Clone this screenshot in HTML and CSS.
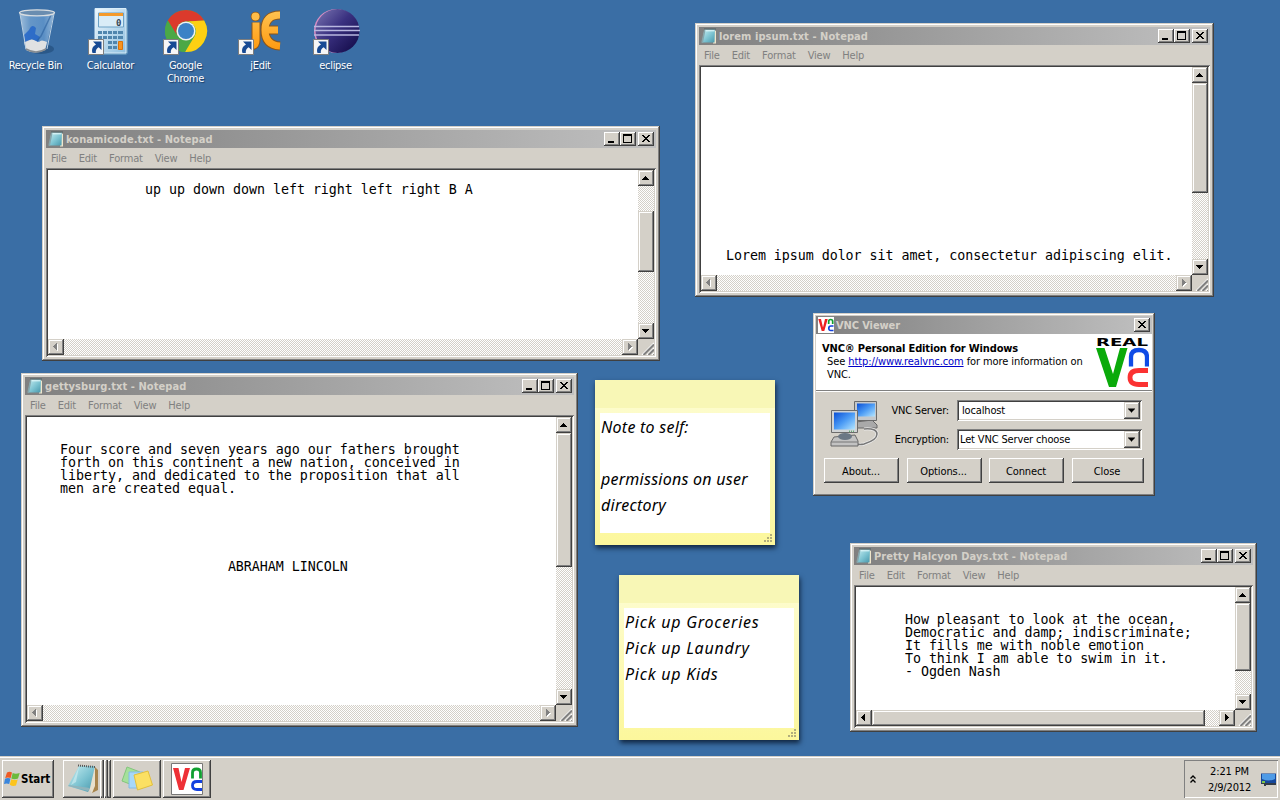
FILE: index.html
```html
<!DOCTYPE html>
<html lang="en">
<head>
<meta charset="utf-8">
<title>Desktop</title>
<link rel="stylesheet" href="styles.css">
</head>
<body>
<svg class="defs" width="0" height="0" aria-hidden="true">
  <defs>
    <linearGradient id="pad" x1="0" y1="0" x2="1" y2="1"><stop offset="0" stop-color="#c9eef2"/><stop offset=".55" stop-color="#7cc3d1"/><stop offset="1" stop-color="#4796ab"/></linearGradient>
    <linearGradient id="screen" x1="0" y1="0" x2="1" y2="1"><stop offset="0" stop-color="#0a4fd6"/><stop offset=".5" stop-color="#4b9bf5"/><stop offset="1" stop-color="#b5e6ff"/></linearGradient>
    <linearGradient id="glass" x1="0" y1="0" x2="1" y2="0"><stop offset="0" stop-color="#a9c6e0"/><stop offset=".3" stop-color="#6b9bcb"/><stop offset=".7" stop-color="#5d92c8"/><stop offset="1" stop-color="#9fbfdd"/></linearGradient>
    <linearGradient id="orange" gradientUnits="userSpaceOnUse" x1="0" y1="2" x2="0" y2="42"><stop offset="0" stop-color="#ffc352"/><stop offset="1" stop-color="#ff9a10"/></linearGradient>
    <linearGradient id="ecl" x1="0" y1="0" x2="1" y2="1"><stop offset="0" stop-color="#7c78b4"/><stop offset=".45" stop-color="#3a3180"/><stop offset="1" stop-color="#0e0642"/></linearGradient>
    <linearGradient id="calc" x1="0" y1="0" x2="1" y2="1"><stop offset="0" stop-color="#eef7fd"/><stop offset="1" stop-color="#8fc0e0"/></linearGradient>
    <symbol id="i-note" viewBox="0 0 16 16">
      <path d="M13 2l2 1v12.500h-3z" fill="#efe6cc"/>
      <path d="M3.500 1.500h10.500L13.500 14.500H1z" fill="url(#pad)"/>
      <path d="M3 2L.3 14.500 2 15 4.500 2z" fill="#86a6ac"/>
      <path d="M3.500 1h11" stroke="#3d5357" stroke-width="1.600" stroke-dasharray="1 1"/>
      <path d="M4.500 2.800h9" stroke="#e8fbfc"/>
    </symbol>
    <symbol id="i-min" viewBox="0 0 16 14"><path d="M4 9h6v2H4z"/></symbol>
    <symbol id="i-max" viewBox="0 0 16 14"><path fill-rule="evenodd" d="M3 2h9v9H3zM4 4v6h7V4z"/></symbol>
    <symbol id="i-close" viewBox="0 0 16 14"><path d="M4 3h2v1h1v1h2V4h1V3h2v1h-1v1h-1v1H9v1h1v1h1v1h1v1h-2V9H9V8H7v1H6v1H4V9h1V8h1V7h1V6H6V5H5V4H4z"/></symbol>
    <symbol id="i-up" viewBox="0 0 16 16"><path d="M7 6h1v1h1v1h1v1h1v1H4V9h1V8h1V7h1z"/></symbol>
    <symbol id="i-down" viewBox="0 0 16 16"><path d="M4 6h7v1h-1v1H9v1H8v1H7V9H6V8H5V7H4z"/></symbol>
    <symbol id="i-left" viewBox="0 0 16 16"><path d="M9 4v7H8v-1H7V9H6V8H5V7h1V6h1V5h1V4z"/></symbol>
    <symbol id="i-right" viewBox="0 0 16 16"><path d="M6 4h1v1h1v1h1v1h1v1H9v1H8v1H7v1H6z"/></symbol>
    <symbol id="i-grip" viewBox="0 0 16 16">
      <path d="M4 16L16 4M9 16l7-7M14 16l2-2" stroke="#fff" stroke-width="1.300"/>
      <path d="M5.500 16L16 5.500M10.500 16L16 10.500M15.500 16l.5-.5" stroke="#808080" stroke-width="2"/>
    </symbol>
    <symbol id="i-dots" viewBox="0 0 8 8"><path fill="#b2ae7c" d="M6 0h2v2H6zM3 3h2v2H3zM6 3h2v2H6zM0 6h2v2H0zM3 6h2v2H3zM6 6h2v2H6z"/></symbol>
    <symbol id="i-arrow" viewBox="0 0 16 16">
      <path d="M.5.500h15v15H.5z" fill="#f6f6f6" stroke="#7d7d7d"/>
      <path d="M5 2.500h8.500V11l-2.800-2.700C8.500 9.500 7.600 11 7.800 14H4.500C3.200 10 5 7 8 5.500z" fill="#174a94"/>
    </symbol>
    <symbol id="i-vnc" viewBox="0 0 32 32">
      <path d="M.5.500h31v31H.5z" fill="#fff" stroke="#777"/>
      <path d="M2 5h5.500l3 14 3.500-14h5l-6.500 22H8z" fill="#ee3036"/>
      <path d="M21.500 15.500V9.500q0-3.500 4-3.500t4 3.500v6" fill="none" stroke="#10a030" stroke-width="2.800"/>
      <path d="M31 18.500h-5q-4.500 0-4.500 4t4.500 4h5" fill="none" stroke="#1240e0" stroke-width="2.800"/>
    </symbol>
    <symbol id="i-vnc-small" viewBox="0 0 16 16">
      <path d="M0 0h16v16H0z" fill="#fff"/>
      <path d="M.3 2h2.700l2 8.500L7 2h2.700L6.300 14H3.700z" fill="#ee2020"/>
      <path d="M10.700 7V4.500q0-2 2-2t2 2V7" fill="none" stroke="#10a030" stroke-width="1.700"/>
      <path d="M15.500 9H13q-2.200 0-2.200 2.300T13 13.500h2.500" fill="none" stroke="#1240e0" stroke-width="1.700"/>
    </symbol>
    <g id="jedit-shape">
      <path d="M19 14.500V32q0 6-6 6" fill="none"/>
      <path d="M43 7Q28 7 28 22t15 16M28 22h13" fill="none"/>
    </g>
  </defs>
</svg>

<main class="desktop">
  <nav class="shortcuts">
    <div class="shortcut">
      <svg width="48" height="48" viewBox="0 0 48 48">
        <ellipse cx="29" cy="41" rx="13" ry="5" fill="#1f4977" opacity=".6"/>
        <path d="M8 5l6 35q10 7 20 0L42 5z" fill="url(#glass)" opacity=".9"/>
        <path d="M12 34l2 8q9 5 19 0l2-8q-6-3-8 0-8-5-15 0z" fill="#dfe1e2"/>
        <path d="M17 22q3-7 7-2l-1 6 5 3-2 5-6-3-7 3-1-7z" fill="#2566c8" opacity=".85"/>
        <path d="M39 7L29 28l-4 5" fill="none" stroke="#295f9d" stroke-width="1.500" opacity=".6"/>
        <path d="M8 6l6 35M42 6l-7 35" stroke="#b9cfe3" fill="none"/>
        <ellipse cx="25" cy="4.800" rx="17.500" ry="3" fill="#6a8db0" stroke="#d8dde1" stroke-width="1.300"/>
        <path d="M14 41q10 6 20 0" fill="none" stroke="#868b90" stroke-width="1.500"/>
      </svg>
      <span class="shortcut-name">Recycle Bin</span>
    </div>
    <div class="shortcut">
      <svg width="48" height="48" viewBox="0 0 48 48">
        <path d="M9 1h30l2 2v42l-2 2H9z" fill="#5e93bb"/>
        <path d="M8 .500h31V45H8z" fill="url(#calc)" stroke="#d9edf9"/>
        <path d="M11.500 5h25v14h-25z" fill="#d9ecf7" stroke="#6ba1c5"/>
        <path d="M12 5h24v3H12z" fill="#f49a2b"/>
        <text x="29" y="17.500" class="calc-digit">0</text>
        <g fill="#4f86ae"><path d="M11 23h4v3h-4zM16 23h4v3h-4zM21 23h4v3h-4zM26 23h4v3h-4zM31 23h5v3h-5zM11 28h4v3h-4zM16 28h4v3h-4zM21 28h4v3h-4zM26 28h4v3h-4zM31 28h5v3h-5zM21 33h4v3h-4zM26 33h4v3h-4zM21 38h4v3h-4zM26 38h4v3h-4z"/></g>
        <path d="M31.500 33.500h4v8h-4z" fill="#f7931e" stroke="#d9730a"/>
        <use href="#i-arrow" x="1" y="31" width="16" height="16"/>
      </svg>
      <span class="shortcut-name">Calculator</span>
    </div>
    <div class="shortcut">
      <svg width="48" height="48" viewBox="0 0 48 48">
        <circle cx="24" cy="23" r="21" fill="#4ba846"/>
        <path d="M5.800 12.500A21 21 0 0 1 42.200 12.500L24 13.500A10 10 0 0 0 15.300 28z" fill="#db3a2c"/>
        <path d="M42.200 12.500A21 21 0 0 1 23 44l9.700-16A10 10 0 0 0 24 13.500z" fill="#fdd013"/>
        <path d="M5.800 12.500L15.300 28A10 10 0 0 0 28 32L23 44A21 21 0 0 1 5.800 12.500z" fill="#4ba846"/>
        <circle cx="24" cy="23" r="9.500" fill="#f2f2f2"/><circle cx="24" cy="23" r="8" fill="#3c82c6"/>
        <use href="#i-arrow" x="1" y="31" width="16" height="16"/>
      </svg>
      <span class="shortcut-name">Google<br>Chrome</span>
    </div>
    <div class="shortcut">
      <svg width="48" height="48" viewBox="0 0 48 48">
        <circle cx="18.500" cy="8.500" r="4.800" fill="#8c5518"/>
        <use href="#jedit-shape" stroke="#8c5518" stroke-width="9"/>
        <circle cx="18.500" cy="8.500" r="4" fill="#ffbd48"/>
        <use href="#jedit-shape" stroke="url(#orange)" stroke-width="7"/>
        <use href="#i-arrow" x="1" y="31" width="16" height="16"/>
      </svg>
      <span class="shortcut-name">jEdit</span>
    </div>
    <div class="shortcut">
      <svg width="48" height="48" viewBox="0 0 48 48">
        <circle cx="24" cy="23" r="22" fill="#d98fc4"/>
        <circle cx="25.500" cy="23" r="22" fill="url(#ecl)"/>
        <path d="M2 18.500h45M2 22.500h46M2 27h45" stroke="#b9b8e0" stroke-width="1.300"/>
        <use href="#i-arrow" x="1" y="31" width="16" height="16"/>
      </svg>
      <span class="shortcut-name">eclipse</span>
    </div>
  </nav>

  <section class="window notepad konami">
    <header class="titlebar"><svg class="app-icon"><use href="#i-note"/></svg><h2 class="title">konamicode.txt - Notepad</h2><div class="controls"><button class="btn"><svg><use href="#i-min"/></svg></button><button class="btn"><svg><use href="#i-max"/></svg></button><button class="btn close"><svg><use href="#i-close"/></svg></button></div></header>
    <nav class="menu"><span>File</span><span>Edit</span><span>Format</span><span>View</span><span>Help</span></nav>
    <div class="client">
      <pre class="text">up up down down left right left right B A</pre>
      <div class="vbar"><i class="sb"><svg><use href="#i-up"/></svg></i><i class="thumb"></i><i class="sb end"><svg><use href="#i-down"/></svg></i></div>
      <div class="hbar off"><i class="sb"><svg><use href="#i-left"/></svg></i><i class="sb end"><svg><use href="#i-right"/></svg></i></div>
      <svg class="grip"><use href="#i-grip"/></svg>
    </div>
  </section>

  <section class="window notepad lorem">
    <header class="titlebar"><svg class="app-icon"><use href="#i-note"/></svg><h2 class="title">lorem ipsum.txt - Notepad</h2><div class="controls"><button class="btn"><svg><use href="#i-min"/></svg></button><button class="btn"><svg><use href="#i-max"/></svg></button><button class="btn close"><svg><use href="#i-close"/></svg></button></div></header>
    <nav class="menu"><span>File</span><span>Edit</span><span>Format</span><span>View</span><span>Help</span></nav>
    <div class="client">
      <pre class="text">Lorem ipsum dolor sit amet, consectetur adipiscing elit.</pre>
      <div class="vbar"><i class="sb"><svg><use href="#i-up"/></svg></i><i class="thumb"></i><i class="sb end"><svg><use href="#i-down"/></svg></i></div>
      <div class="hbar off"><i class="sb"><svg><use href="#i-left"/></svg></i><i class="sb end"><svg><use href="#i-right"/></svg></i></div>
      <svg class="grip"><use href="#i-grip"/></svg>
    </div>
  </section>

  <section class="window notepad gettysburg">
    <header class="titlebar"><svg class="app-icon"><use href="#i-note"/></svg><h2 class="title">gettysburg.txt - Notepad</h2><div class="controls"><button class="btn"><svg><use href="#i-min"/></svg></button><button class="btn"><svg><use href="#i-max"/></svg></button><button class="btn close"><svg><use href="#i-close"/></svg></button></div></header>
    <nav class="menu"><span>File</span><span>Edit</span><span>Format</span><span>View</span><span>Help</span></nav>
    <div class="client">
      <pre class="text">Four score and seven years ago our fathers brought
forth on this continent a new nation, conceived in
liberty, and dedicated to the proposition that all
men are created equal.





                     ABRAHAM LINCOLN</pre>
      <div class="vbar"><i class="sb"><svg><use href="#i-up"/></svg></i><i class="thumb"></i><i class="sb end"><svg><use href="#i-down"/></svg></i></div>
      <div class="hbar off"><i class="sb"><svg><use href="#i-left"/></svg></i><i class="sb end"><svg><use href="#i-right"/></svg></i></div>
      <svg class="grip"><use href="#i-grip"/></svg>
    </div>
  </section>

  <section class="window notepad halcyon">
    <header class="titlebar"><svg class="app-icon"><use href="#i-note"/></svg><h2 class="title">Pretty Halcyon Days.txt - Notepad</h2><div class="controls"><button class="btn"><svg><use href="#i-min"/></svg></button><button class="btn"><svg><use href="#i-max"/></svg></button><button class="btn close"><svg><use href="#i-close"/></svg></button></div></header>
    <nav class="menu"><span>File</span><span>Edit</span><span>Format</span><span>View</span><span>Help</span></nav>
    <div class="client">
      <pre class="text">How pleasant to look at the ocean,
Democratic and damp; indiscriminate;
It fills me with noble emotion
To think I am able to swim in it.
- Ogden Nash</pre>
      <div class="vbar"><i class="sb"><svg><use href="#i-up"/></svg></i><i class="thumb"></i><i class="sb end"><svg><use href="#i-down"/></svg></i></div>
      <div class="hbar"><i class="sb"><svg><use href="#i-left"/></svg></i><i class="thumb"></i><i class="sb end"><svg><use href="#i-right"/></svg></i></div>
      <svg class="grip"><use href="#i-grip"/></svg>
    </div>
  </section>

  <section class="window vnc">
    <header class="titlebar"><svg class="app-icon"><use href="#i-vnc-small"/></svg><h2 class="title">VNC Viewer</h2><div class="controls"><button class="btn close"><svg><use href="#i-close"/></svg></button></div></header>
    <div class="banner">
      <div class="banner-text">
        <strong>VNC® Personal Edition for Windows</strong>
        <p>See <a>http://www.realvnc.com</a> for more information on<br>VNC.</p>
      </div>
      <svg class="logo" width="54" height="52" viewBox="0 0 54 52">
        <text x="1" y="9" class="real" textLength="52" lengthAdjust="spacingAndGlyphs">REAL</text>
        <path d="M1 11h8.500l8.500 26 7-26h7.500L21 50h-7z" fill="#0aaa0a"/>
        <path d="M36 29.500V20q0-7 8-7t8 7v9.500" fill="none" stroke="#0f4be6" stroke-width="4.300"/>
        <path d="M53 33.500h-9q-9 0-9 7t9 7h9" fill="none" stroke="#fb3232" stroke-width="4.800"/>
      </svg>
    </div>
    <div class="form">
      <svg class="computers" width="50" height="48" viewBox="0 0 50 48">
        <path d="M26 22l16-2 5 5v3H26z" fill="#a9a9a9" stroke="#666"/>
        <path d="M24.500 1.500h22v19h-22z" fill="#c4c8cc" stroke="#6b6b6b"/>
        <path d="M27 3.500h18v13H27z" fill="url(#screen)"/>
        <path d="M34 29q13-1 13 5t-13 10q-4 1-7 0" fill="none" stroke="#eee" stroke-width="3"/>
        <path d="M34 29q13-1 13 5t-13 10q-4 1-7 0" fill="none" stroke="#777" stroke-width="1.500"/>
        <path d="M4 37l21-2 3 6v5H1v-4z" fill="#c2c2c2" stroke="#666"/>
        <ellipse cx="15" cy="36.500" rx="7" ry="3.500" fill="#6b7784"/>
        <path d="M1 42h27" stroke="#777"/>
        <path d="M1.500 10.500h26v22h-26z" fill="#d0d3d5" stroke="#6b6b6b"/>
        <path d="M4 12.500h21v17H4z" fill="url(#screen)"/>
        <path d="M19 31.200h6" stroke="#37994a" stroke-dasharray="1 1"/>
      </svg>
      <label class="lbl">VNC Server:</label>
      <div class="combo server"><span>localhost</span><i class="sb"><svg><use href="#i-down"/></svg></i></div>
      <label class="lbl">Encryption:</label>
      <div class="combo"><span>Let VNC Server choose</span><i class="sb"><svg><use href="#i-down"/></svg></i></div>
    </div>
    <div class="actions"><button class="btn">About...</button><button class="btn">Options...</button><button class="btn">Connect</button><button class="btn">Close</button></div>
  </section>

  <article class="sticky self">
    <div class="sticky-text">Note to self:<br><br>permissions on user<br>directory</div>
    <svg class="dots" width="8" height="8"><use href="#i-dots"/></svg>
  </article>
  <article class="sticky pickup">
    <div class="sticky-text">Pick up Groceries<br>Pick up Laundry<br>Pick up Kids</div>
    <svg class="dots" width="8" height="8"><use href="#i-dots"/></svg>
  </article>
</main>

<footer class="taskbar">
  <button class="btn start">
    <svg width="16" height="16" viewBox="0 0 16 16">
      <path d="M3 1.500Q5.500 0 8 1.500L6.700 7Q4 5.800 1.200 7z" fill="#ee5a24"/>
      <path d="M8.700 2q2.800 1.400 7 0L14 7.500q-3.500 1.400-6.700 0z" fill="#6cba3a"/>
      <path d="M1 7.800q2.700-1.400 5.500-.2L5.200 13Q2.500 11.800 0 13z" fill="#3a86dc"/>
      <path d="M7.200 8.200q3.300 1.400 6.500.2L12 14.500q-3.500 1.200-6.200-.8z" fill="#fcc41c"/>
    </svg>
    <span>Start</span>
  </button>
  <button class="btn stack">
    <svg width="32" height="32" viewBox="0 0 32 32">
      <path d="M28 4l3 3v20l-6 3z" fill="#a7844c"/>
      <path d="M28 4v19l-3 7-3-5z" fill="#e8e0cc"/>
      <path d="M12 3h16l-5 22-2 4L1 23z" fill="url(#pad)"/>
      <path d="M12 4l-8 18 5-3z" fill="#dff6f8" opacity=".5"/>
      <path d="M11 2.500l17 1.500" stroke="#555" stroke-width="2" stroke-dasharray="1 1"/>
      <path d="M1 23l20 5 2-3-21-3z" fill="#8fb4bc"/>
    </svg>
    <i class="edge"></i><i class="edge"></i>
  </button>
  <button class="btn app">
    <svg width="32" height="30" viewBox="0 0 32 30">
      <path d="M6 3l13 5-5 14-13-5z" fill="#a5e09b" stroke="#83c67c"/>
      <path d="M8 8h14v16H8z" fill="#a7d8f8" stroke="#83bce4"/>
      <path d="M13 11l14-4 4.500 14-15 5z" fill="#fbe063" stroke="#e2bf3d"/>
    </svg>
  </button>
  <button class="btn app"><svg width="32" height="32"><use href="#i-vnc"/></svg></button>
  <div class="tray">
    <svg width="6" height="9" viewBox="0 0 6 9"><path d="M.5 3.500L3 1l2.500 2.500M.5 7.500L3 5l2.500 2.500" fill="none" stroke="#000" stroke-width="1.300"/></svg>
    <div class="clock"><span>2:21 PM</span><span>2/9/2012</span></div>
    <svg width="15" height="13" viewBox="0 0 15 13"><path d="M0 .500h15V10H0z" fill="#15479b"/><path d="M1 1h13v5Q8 9 1 6z" fill="#4f9be6"/><path d="M0 10h15v2H5v1H3v-2H0z" fill="#333c48"/><path d="M1 8h3v2H1z" fill="#7bc64a"/></svg>
  </div>
</footer>
</body>
</html>
```

FILE: styles.css
```css
* { box-sizing: border-box; }
body {
  margin: 0; width: 1280px; height: 800px; overflow: hidden;
  display: flex; flex-direction: column;
  background: #3a6ea5; color: #000;
  font: 11px/13px "DejaVu Sans Condensed", "DejaVu Sans", sans-serif;
  font-stretch: condensed;
}
.defs { position: absolute; }
svg { display: block; flex: none; }
button { font: inherit; color: inherit; border: 0; padding: 0; margin: 0; }
h2, p, pre { margin: 0; }
.desktop { position: relative; flex: 1; }

/* Desktop shortcuts */
.shortcuts { display: flex; padding: 8px 0 0; margin-left: -2px; }
.shortcut { width: 75px; display: flex; flex-direction: column; align-items: center; gap: 3px; color: #fff; text-align: center; text-shadow: 1px 1px 1px #1c3d66; letter-spacing: -.3px; }
.calc-digit { font: bold 9px "DejaVu Sans Mono", monospace; fill: #345; text-shadow: none; }

/* Raised and sunken edges */
.window, .sb, .thumb {
  background: #d4d0c8;
  box-shadow: inset -1px -1px #404040, inset 1px 1px #d4d0c8, inset -2px -2px #808080, inset 2px 2px #fff;
}
.btn {
  background: #d4d0c8;
  box-shadow: inset -1px -1px #404040, inset 1px 1px #fff, inset -2px -2px #808080;
}
.client, .combo {
  background: #fff;
  box-shadow: inset 1px 1px #808080, inset -1px -1px #fff, inset 2px 2px #404040, inset -2px -2px #d4d0c8;
}

/* Windows */
.window { position: absolute; display: flex; flex-direction: column; padding: 4px; }
.konami { left: 42px; top: 126px; width: 618px; height: 235px; }
.lorem { left: 695px; top: 23px; width: 519px; height: 274px; }
.gettysburg { left: 21px; top: 373px; width: 557px; height: 354px; }
.halcyon { left: 850px; top: 543px; width: 407px; height: 189px; }
.titlebar { display: flex; align-items: center; height: 18px; padding: 0 2px; background: linear-gradient(90deg, #808080, #c0c0c0); flex: none; }
.app-icon { width: 16px; height: 16px; }
.title { flex: 1; padding-left: 2px; color: #d4d0c8; font-size: 11px; font-weight: bold; letter-spacing: .07px; white-space: nowrap; }
.controls { display: flex; }
.controls .btn, .controls svg { width: 16px; height: 14px; }
.controls .close { margin-left: 2px; }
.menu { height: 20px; display: flex; gap: 12px; padding: 4px 5px 0; color: #808080; flex: none; letter-spacing: -.2px; }
.client { flex: 1; display: grid; grid-template: 1fr 16px / 1fr 16px; padding: 2px; min-height: 0; }
.text { font: 13.33px/13px "DejaVu Sans Mono", monospace; font-stretch: normal; letter-spacing: -.03px; overflow: hidden; }
.konami .text { padding: 13px 0 0 97px; }
.lorem .text { padding: 182px 0 0 25px; letter-spacing: -.05px; }
.gettysburg .text { padding: 26px 0 0 33px; }
.halcyon .text { padding: 26px 0 0 49px; letter-spacing: -.06px; }

/* Scrollbars */
.vbar, .hbar { display: flex; background: repeating-conic-gradient(#fff 0 25%, #d4d0c8 0 50%) 0 0 / 2px 2px; }
.vbar { flex-direction: column; }
.sb, .sb svg, .grip { width: 16px; height: 16px; display: block; flex: none; }
.vbar .end { margin-top: auto; }
.hbar .end { margin-left: auto; }
.off svg { fill: #808080; filter: drop-shadow(1px 1px 0 #fff); }
.grip { background: #d4d0c8; }
.konami .thumb { height: 61px; margin-top: 25px; }
.lorem .thumb { height: 110px; }
.gettysburg .thumb { height: 134px; }
.halcyon .vbar .thumb { height: 68px; }
.halcyon .hbar .thumb { width: 333px; }

/* VNC dialog */
.vnc { left: 813px; top: 313px; width: 342px; height: 183px; padding: 3px; }
.vnc .title { letter-spacing: -.1px; }
.banner { display: flex; justify-content: space-between; height: 57px; padding: 3px 3px 0 6px; background: #fff; border-bottom: 1px solid #808080; box-shadow: 0 1px #fff; flex: none; }
.banner-text { padding-top: 5px; white-space: nowrap; }
.banner strong { display: block; letter-spacing: -.15px; }
.banner p { padding-left: 5px; letter-spacing: -.09px; }
.banner a { color: #0000c8; text-decoration: underline; }
.real { font: bold 11px "DejaVu Sans", sans-serif; }
.form { display: grid; grid-template: 21px 21px / 50px 77px 185px; row-gap: 8px; padding: 9px 0 0 14px; align-items: center; }
.computers { grid-row: 1 / 3; align-self: start; }
.lbl { text-align: right; padding-right: 8px; letter-spacing: -.2px; }
.combo { display: flex; justify-content: space-between; align-items: center; height: 21px; padding: 2px; letter-spacing: -.15px; }
.combo span { padding-left: 1px; }
.server span { padding-left: 3px; }
.combo .sb, .combo svg { height: 17px; }
.actions { display: grid; grid-template-columns: 75px 75px 75px 72px; gap: 7.500px; padding: 8px 0 0 8px; }
.actions .btn { height: 25px; padding-top: 1px; padding-right: 1px; letter-spacing: -.1px; }

/* Sticky notes */
.sticky { position: absolute; width: 180px; height: 165px; padding: 33px 5px 0; background: linear-gradient(#f8f7b6 28px, #fdfccb 28px, #fcf79c); box-shadow: 1px 3px 5px #10253f; }
.self { left: 595px; top: 380px; letter-spacing: .25px; }
.pickup { left: 619px; top: 575px; letter-spacing: .75px; }
.sticky-text { height: 120px; background: #fff; padding: 1px 1px 0; font: italic 16px/26px "Noto Sans", sans-serif; font-stretch: normal; white-space: nowrap; }
.dots { margin: 1px -2px 0 auto; }

/* Taskbar */
.taskbar { height: 44px; display: flex; padding: 4px 2px 2px; background: #d4d0c8; box-shadow: inset 0 1px #d4d0c8, inset 0 2px #fff; flex: none; }
.taskbar .btn { display: flex; align-items: center; height: 38px; }
.start { width: 52px; padding-left: 2px; gap: 1px; font-size: 11.500px; font-weight: bold; letter-spacing: -.05px; }
.stack { width: 48px; margin-left: 9px; padding-left: 4px; }
.edge { width: 4px; height: 38px; box-shadow: inset -1px 0 #404040, inset 1px 0 #fff, inset -2px 0 #808080; }
.stack svg { margin-right: 1px; }
.app { width: 48px; margin-left: 2px; justify-content: center; }
.tray { display: flex; align-items: center; width: 94px; height: 38px; margin-left: auto; padding: 1px 0 0 6px; box-shadow: inset 1px 1px #808080, inset -1px -1px #fff; }
.clock { display: flex; flex-direction: column; width: 65px; padding-left: 2px; line-height: 16px; text-align: center; letter-spacing: -.15px; }
```
